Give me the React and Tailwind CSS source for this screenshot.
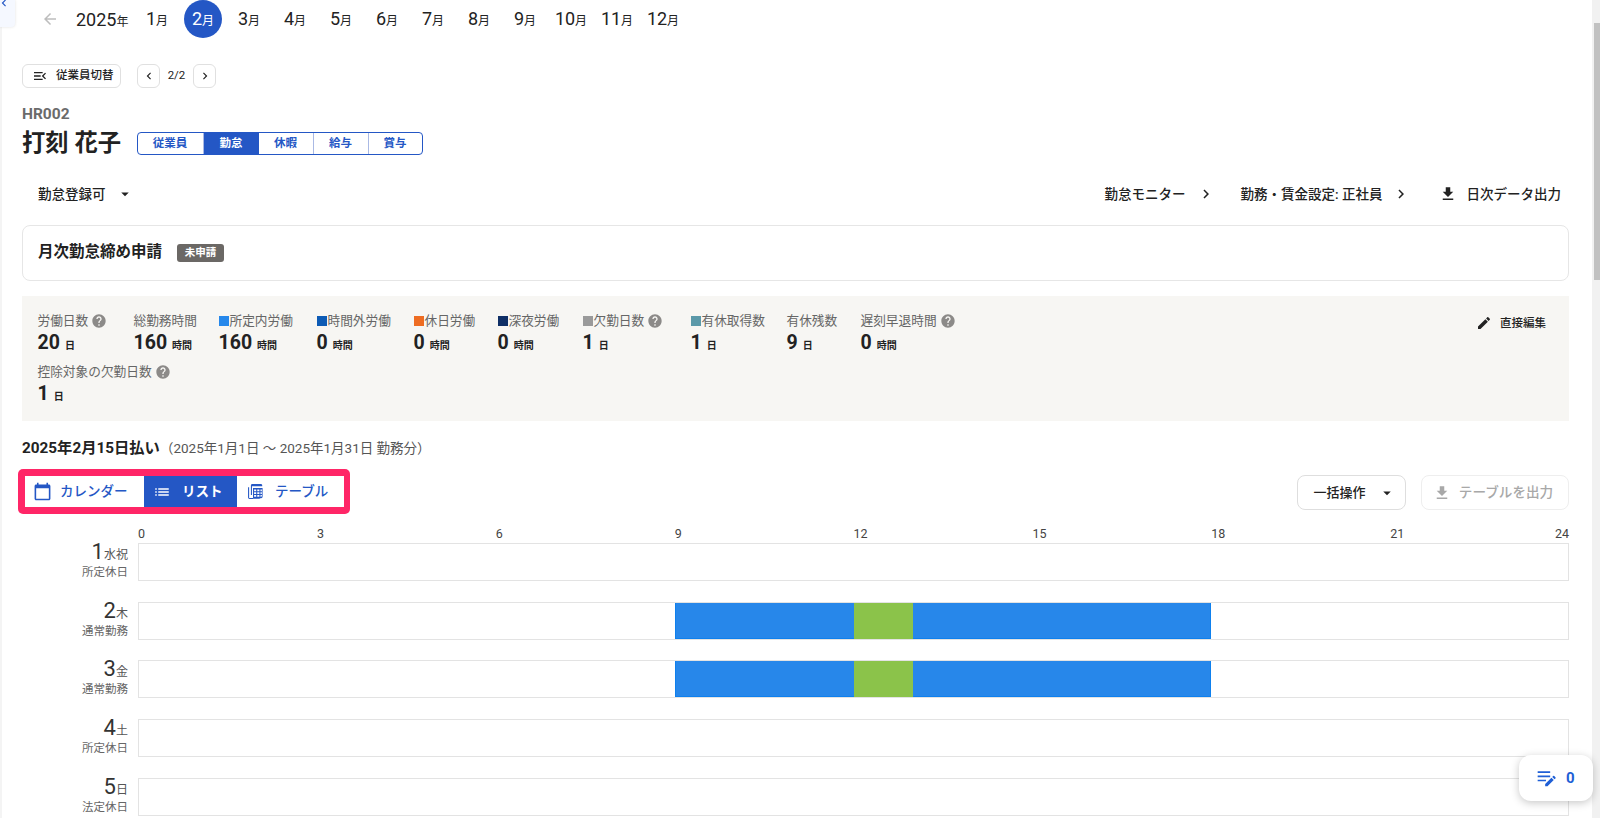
const P = {
  edit: "M3 17.25V21h3.75L17.81 9.94l-3.75-3.75L3 17.25zM20.71 7.04c.39-.39.39-1.02 0-1.41l-2.34-2.34c-.39-.39-1.02-.39-1.41 0l-1.83 1.83 3.75 3.75 1.83-1.83z",
  download: "M5 20h14v-2H5v2zM19 9h-4V3H9v6H5l7 7 7-7z",
  help: "M12 2C6.48 2 2 6.48 2 12s4.48 10 10 10 10-4.48 10-10S17.52 2 12 2zm1 17h-2v-2h2v2zm2.07-7.75l-.9.92C13.45 12.9 13 13.5 13 15h-2v-.5c0-1.1.45-2.1 1.17-2.83l1.24-1.26c.37-.36.59-.86.59-1.41 0-1.1-.9-2-2-2s-2 .9-2 2H8c0-2.21 1.79-4 4-4s4 1.79 4 4c0 .88-.36 1.68-.93 2.25z",
  cal: "M20 3h-1V1h-2v2H7V1H5v2H4c-1.1 0-2 .9-2 2v16c0 1.1.9 2 2 2h16c1.1 0 2-.9 2-2V5c0-1.1-.9-2-2-2zm0 18H4V8h16v13z",
  list: "M3 13h2v-2H3v2zm0 4h2v-2H3v2zm0-8h2V7H3v2zm4 4h14v-2H7v2zm0 4h14v-2H7v2zM7 7v2h14V7H7z",
  menu: "M3 18h13v-2H3v2zm0-5h10v-2H3v2zm0-7v2h13V6H3zm18 9.59L17.42 12 21 8.41 19.59 7l-5 5 5 5L21 15.59z",
  left: "M15.41 7.41L14 6l-6 6 6 6 1.41-1.41L10.83 12z",
  right: "M10 6L8.59 7.41 13.17 12l-4.58 4.59L10 18l6-6z",
  back: "M20 11H7.83l5.59-5.59L12 4l-8 8 8 8 1.41-1.41L7.83 13H20v-2z",
  drop: "M7 10l5 5 5-5z",
  table: "M3 6H1.5v14.5c0 1.1.9 2 2 2H18V21H3V6zM7.5 1.5h12c1.1 0 2 .9 2 2v1H5.5v-1c0-1.1.9-2 2-2zM5.5 4.5H7V17h-1.5zM8.5 7h13.5v12.5c0 1.1-.9 2-2 2H8.5V7zm1.5 2v2.5h3V9zm4.5 0v2.5h3V9zm4.5 0v2.5h2V9zM10 13v2.5h3V13zm4.5 0v2.5h3V13zm4.5 0v2.5h2V13zM10 17v2.5h3V17zm4.5 0v2.5h3V17zm4.5 0v2.5h1c.6 0 1-.4 1-1V17z",
  notes: "M2 4h15v2H2zM2 9h15v2H2zM2 14h10v2H2zM11 22v-2.8l7.5-7.5 2.8 2.8L13.8 22zM19.5 10.7l1-1a1 1 0 0 1 1.4 0l1.4 1.4a1 1 0 0 1 0 1.4l-1 1z",
};

function Icon({ d, className }) {
  return (
    <svg viewBox="0 0 24 24" fill="currentColor" fillRule="evenodd" className={className}>
      <path d={d} />
    </svg>
  );
}

const months = [1, 2, 3, 4, 5, 6, 7, 8, 9, 10, 11, 12];

const stats = [
  { label: "労働日数", v: "20", u: "日", help: true, w: "w-[96px]" },
  { label: "総勤務時間", v: "160", u: "時間", w: "w-[85px]" },
  { label: "所定内労働", v: "160", u: "時間", c: "bg-[#2688eb]", w: "w-[98px]" },
  { label: "時間外労働", v: "0", u: "時間", c: "bg-[#0d5bb5]", w: "w-[97px]" },
  { label: "休日労働", v: "0", u: "時間", c: "bg-[#ee6c22]", w: "w-[84px]" },
  { label: "深夜労働", v: "0", u: "時間", c: "bg-[#0f2f66]", w: "w-[85px]" },
  { label: "欠勤日数", v: "1", u: "日", c: "bg-[#9a9a9a]", help: true, w: "w-[108px]" },
  { label: "有休取得数", v: "1", u: "日", c: "bg-[#5b99a9]", w: "w-[96px]" },
  { label: "有休残数", v: "9", u: "日", w: "w-[74px]" },
  { label: "遅刻早退時間", v: "0", u: "時間", help: true, w: "w-[130px]" },
];

const days = [
  { d: 1, w: "水祝", t: "所定休日" },
  { d: 2, w: "木", t: "通常勤務", work: true },
  { d: 3, w: "金", t: "通常勤務", work: true },
  { d: 4, w: "土", t: "所定休日" },
  { d: 5, w: "日", t: "法定休日" },
];

function Stat({ s }) {
  return (
    <div className={s.w}>
      <div className="flex items-center h-[16px] text-[12.7px] leading-none text-[#666]">
        {s.c && <span className={`w-[10px] h-[10px] mr-[1px] ${s.c}`} />}
        <span>{s.label}</span>
        {s.help && <Icon d={P.help} className="w-[16px] h-[16px] ml-[3px] text-[#8c8a88]" />}
      </div>
      <div className="flex items-baseline mt-[4px] h-[24px] leading-none text-[#222]">
        <span className="text-[19.5px] font-bold">{s.v}</span>
        <span className="text-[10px] font-bold ml-[5px]">{s.u}</span>
      </div>
    </div>
  );
}

function Row({ day }) {
  return (
    <div className="flex h-[58.67px]">
      <div className="w-[106px] mr-[10px] h-[38px] text-right">
        <div className="h-[20px] leading-[20px] text-[#333] mt-[-1px]">
          <span className="text-[22px]">{day.d}</span>
          <span className="text-[12px] text-[#555]">{day.w}</span>
        </div>
        <div className="text-[11.5px] leading-[14px] mt-[3px] text-[#666]">{day.t}</div>
      </div>
      <div className="flex-1 h-[38px] border border-[#e3e3e3] flex">
        {day.work && (
          <>
            <div className="w-[37.5%]" />
            <div className="w-[12.5%] bg-[#2787ea] border-b border-l border-[#0e80ee]" />
            <div className="w-[4.17%] bg-[#8bc34a]" />
            <div className="w-[20.83%] bg-[#2787ea] border-b border-r border-[#0e80ee]" />
          </>
        )}
      </div>
    </div>
  );
}

export default function App() {
  return (
    <div className="relative flex h-[818px] overflow-hidden bg-white text-[#222] font-['Roboto','Noto_Sans_CJK_JP',sans-serif]">
      <div className="w-[2px] bg-[#f4f4f4] shrink-0" />

      <main className="flex-1 min-w-0 pl-[20px] pr-[23px]">
        {/* Year and months */}
        <div className="flex items-center h-[38px]">
          <Icon d={P.back} className="w-[18px] h-[18px] ml-[19px] text-[#bdbdbd]" />
          <div className="ml-[17px] w-[62px] flex items-baseline">
            <span className="text-[18px]">2025</span>
            <span className="text-[12px]">年</span>
          </div>
          <div className="flex gap-[8px]">
            {months.map((m) => (
              <div
                key={m}
                className={`w-[38px] h-[38px] rounded-full flex items-baseline justify-center leading-[38px] ${
                  m === 2 ? "bg-[#2457c5] text-white" : "text-[#222]"
                }`}
              >
                <span className="text-[18px]">{m}</span>
                <span className="text-[12px]">月</span>
              </div>
            ))}
          </div>
        </div>

        {/* Employee switch */}
        <div className="flex items-center mt-[26px] h-[24px]">
          <button className="flex items-center h-[24px] w-[99px] pl-[9px] border border-[#e0e0e0] rounded-[6px] text-[11.5px] font-medium">
            <Icon d={P.menu} className="w-[16px] h-[16px] mr-[8px]" />
            従業員切替
          </button>
          <button className="ml-[16px] w-[23px] h-[24px] flex items-center justify-center border border-[#e0e0e0] rounded-[6px]">
            <Icon d={P.left} className="w-[14px] h-[14px]" />
          </button>
          <span className="w-[33px] text-center text-[11.5px]">2/2</span>
          <button className="w-[23px] h-[24px] flex items-center justify-center border border-[#e0e0e0] rounded-[6px]">
            <Icon d={P.right} className="w-[14px] h-[14px]" />
          </button>
        </div>

        {/* Name and tabs */}
        <div className="mt-[18px] text-[15.5px] leading-[16px] font-bold text-[#6b6b6b]">HR002</div>
        <div className="flex items-center mt-[10px] h-[23px]">
          <h1 className="text-[23.3px] font-bold w-[114.5px] shrink-0 whitespace-nowrap leading-none">打刻 花子</h1>
          <div className="flex h-[23px] w-[286px] border border-[#2457c5] rounded-[4px] overflow-hidden text-[11.5px] font-bold text-[#2457c5]">
            <div className="w-[66px] flex items-center justify-center border-r border-[#aab9e4]">従業員</div>
            <div className="w-[55px] flex items-center justify-center bg-[#2457c5] text-white">勤怠</div>
            <div className="w-[55px] flex items-center justify-center border-r border-[#aab9e4]">休暇</div>
            <div className="w-[55px] flex items-center justify-center border-r border-[#aab9e4]">給与</div>
            <div className="flex-1 flex items-center justify-center">賞与</div>
          </div>
        </div>

        {/* Status row */}
        <div className="flex items-center justify-between mt-[28px] h-[22px] text-[13.5px] font-medium">
          <div className="flex items-center ml-[16px]">
            <span>勤怠登録可</span>
            <Icon d={P.drop} className="w-[18px] h-[18px] ml-[10px]" />
          </div>
          <div className="flex items-center mr-[8px]">
            <span>勤怠モニター</span>
            <Icon d={P.right} className="w-[18px] h-[18px] ml-[11px]" />
            <span className="ml-[26px]">勤務・賃金設定: 正社員</span>
            <Icon d={P.right} className="w-[18px] h-[18px] ml-[9px]" />
            <Icon d={P.download} className="w-[18px] h-[18px] ml-[29px]" />
            <span className="ml-[10px]">日次データ出力</span>
          </div>
        </div>

        {/* Monthly close card */}
        <div className="flex items-center mt-[20px] h-[56px] pl-[15px] border border-[#e6e6e6] rounded-[8px]">
          <span className="text-[15.5px] font-bold">月次勤怠締め申請</span>
          <span className="ml-[15px] w-[47px] h-[18px] flex items-center justify-center rounded-[3px] bg-[#6b6865] text-white text-[10.5px] font-bold">
            未申請
          </span>
        </div>

        {/* Stats */}
        <div className="flex justify-between mt-[15px] h-[125px] pl-[15.5px] pr-[23px] pt-[17px] bg-[#f7f6f3]">
          <div className="flex flex-wrap content-start w-[1000px]">
            {stats.map((s) => (
              <Stat key={s.label} s={s} />
            ))}
            <div className="w-full mt-[7px]">
              <Stat s={{ label: "控除対象の欠勤日数", v: "1", u: "日", help: true, w: "w-[200px]" }} />
            </div>
          </div>
          <div className="flex items-start">
            <Icon d={P.edit} className="w-[16px] h-[16px] mt-[2px] mr-[8px]" />
            <span className="text-[11.5px] font-medium leading-[20px]">直接編集</span>
          </div>
        </div>

        {/* Pay date */}
        <div className="flex items-baseline mt-[17px] h-[20px] leading-[20px]">
          <span className="text-[15.3px] font-bold">2025年2月15日払い</span>
          <span className="text-[13.5px] text-[#555]">（2025年1月1日 〜 2025年1月31日 勤務分）</span>
        </div>

        {/* View switch and actions */}
        <div className="flex items-start justify-between mt-[11px] h-[45px] -ml-[4px]">
          <div className="flex h-[45px] p-[7px] pr-[6px] bg-[#ff2667] rounded-[5px]">
            <div className="flex h-[31px] bg-white text-[13.5px] text-[#2457c5] font-medium">
              <div className="w-[119px] flex items-center pl-[8px]">
                <Icon d={P.cal} className="w-[19px] h-[19px] mr-[8px]" />
                カレンダー
              </div>
              <div className="w-[93px] flex items-center pl-[9px] bg-[#2457c5] text-white font-bold">
                <Icon d={P.list} className="w-[18px] h-[18px] mr-[11px]" />
                リスト
              </div>
              <div className="w-[107px] flex items-center pl-[10px]">
                <Icon d={P.table} className="w-[17px] h-[17px] mr-[11px]" />
                テーブル
              </div>
            </div>
          </div>
          <div className="flex gap-[15px] mt-[6px]">
            <button className="w-[109px] h-[35px] flex items-center justify-center pl-[6px] border border-[#dedede] rounded-[8px] text-[13px] font-medium">
              一括操作
              <Icon d={P.drop} className="w-[18px] h-[18px] ml-[12px]" />
            </button>
            <button className="w-[148px] h-[35px] flex items-center justify-center pr-[4px] border border-[#eeeeee] rounded-[8px] text-[13.6px] font-medium text-[#a8a8a8]">
              <Icon d={P.download} className="w-[18px] h-[18px] mr-[8px]" />
              テーブルを出力
            </button>
          </div>
        </div>

        {/* Time chart */}
        <div className="flex mt-[12px] h-[16px] pl-[116px] text-[12.5px] leading-[16px] text-[#444]">
          {[0, 3, 6, 9, 12, 15, 18].map((h) => (
            <span key={h} className="w-[12.5%]">{h}</span>
          ))}
          <div className="w-[12.5%] flex justify-between">
            <span>21</span>
            <span>24</span>
          </div>
        </div>
        <div className="mt-[1px]">
          {days.map((d) => (
            <Row key={d.d} day={d} />
          ))}
        </div>
      </main>

      {/* Scrollbar */}
      <div className="w-[8px] shrink-0 bg-[#f1f1f1] pt-[23px] pl-[2px]">
        <div className="h-[257px] bg-[#c1c1c1]" />
      </div>

      {/* Collapsed side tab */}
      <div className="absolute left-0 top-0 w-[15px] h-[27px] bg-[#f5f8ff] rounded-br-[4px] shadow-[0_0_3px_rgba(0,0,0,0.12)] overflow-hidden">
        <Icon d={P.left} className="w-[14px] h-[14px] -mt-[4px] -ml-[3px] text-[#2457c5]" />
      </div>

      {/* Floating counter */}
      <div className="absolute right-[7px] bottom-[17px] w-[74px] h-[46px] flex items-center pl-[17px] bg-white rounded-[12px] shadow-[0_2px_8px_rgba(0,0,0,0.22)] text-[#1f5fd6]">
        <Icon d={P.notes} className="w-[20px] h-[20px]" />
        <span className="ml-[10px] text-[15px] font-bold">0</span>
      </div>
    </div>
  );
}
